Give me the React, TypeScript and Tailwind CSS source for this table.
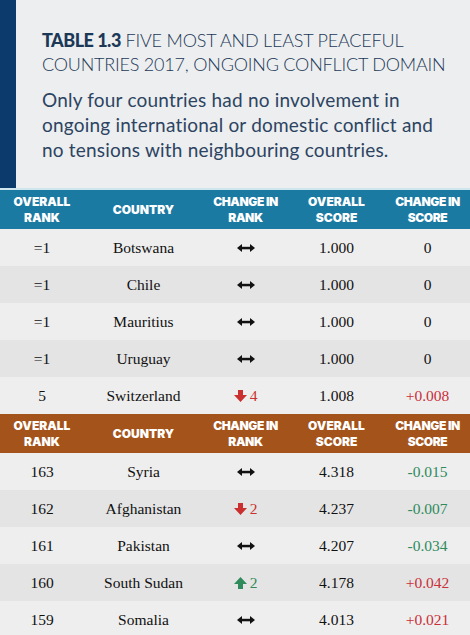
import React from "react";

type Row = {
  rank: string;
  country: string;
  change: "same" | "down" | "up";
  changeN?: string;
  score: string;
  delta: string;
  deltaTone?: "red" | "green" | "plain";
};

const top: Row[] = [
  { rank: "=1", country: "Botswana", change: "same", score: "1.000", delta: "0" },
  { rank: "=1", country: "Chile", change: "same", score: "1.000", delta: "0" },
  { rank: "=1", country: "Mauritius", change: "same", score: "1.000", delta: "0" },
  { rank: "=1", country: "Uruguay", change: "same", score: "1.000", delta: "0" },
  { rank: "5", country: "Switzerland", change: "down", changeN: "4", score: "1.008", delta: "+0.008", deltaTone: "red" },
];

const bottom: Row[] = [
  { rank: "163", country: "Syria", change: "same", score: "4.318", delta: "-0.015", deltaTone: "green" },
  { rank: "162", country: "Afghanistan", change: "down", changeN: "2", score: "4.237", delta: "-0.007", deltaTone: "green" },
  { rank: "161", country: "Pakistan", change: "same", score: "4.207", delta: "-0.034", deltaTone: "green" },
  { rank: "160", country: "South Sudan", change: "up", changeN: "2", score: "4.178", delta: "+0.042", deltaTone: "red" },
  { rank: "159", country: "Somalia", change: "same", score: "4.013", delta: "+0.021", deltaTone: "red" },
];

const cols = "grid grid-cols-[84px_119px_85px_97px_85px]";

const Same = () => (
  <svg width="18" height="8" viewBox="0 0 18 8">
    <path d="M0 4 L5 0 L5 8 Z M18 4 L13 0 L13 8 Z" fill="#111" />
    <rect x="4" y="2.8" width="10" height="2.5" fill="#111" />
  </svg>
);

const Arrow = ({ up }: { up?: boolean }) => (
  <svg width="13" height="12" viewBox="0 0 13 12" className={up ? "rotate-180" : ""}>
    <path d="M4 0 H9 V5 H13 L6.5 12 L0 5 H4 Z" fill={up ? "#2f8b5c" : "#c9302f"} />
  </svg>
);

const Header = ({ bg }: { bg: string }) => (
  <div
    className={`${cols} h-[39px] items-center text-white text-[12px] leading-[16px] font-black uppercase text-center ${bg}`}
    style={{ fontFamily: "Inter, 'DejaVu Sans', sans-serif" }}
  >
    <div>Overall<br />Rank</div>
    <div>Country</div>
    <div className="tracking-[-0.4px]">Change in<br />Rank</div>
    <div>Overall<br />Score</div>
    <div className="tracking-[-0.4px]">Change in<br />Score</div>
  </div>
);

const Rows = ({ rows }: { rows: Row[] }) => (
  <div style={{ fontFamily: "'Liberation Serif', 'DejaVu Serif', serif" }}>
    {rows.map((r, i) => (
      <div
        key={r.country}
        className={`${cols} h-[37px] items-center text-center text-[15.5px] text-[#111] ${i % 2 === 0 ? "bg-[#eeeeee]" : "bg-[#e4e4e4]"}`}
      >
        <div>{r.rank}</div>
        <div>{r.country}</div>
        <div className="flex items-center justify-center gap-[3px]">
          {r.change === "same" ? (
            <Same />
          ) : (
            <>
              <Arrow up={r.change === "up"} />
              <span className={r.change === "up" ? "text-[#2f8b5c]" : "text-[#c9302f]"}>{r.changeN}</span>
            </>
          )}
        </div>
        <div>{r.score}</div>
        <div
          className={
            r.deltaTone === "red" ? "text-[#c9303a]" : r.deltaTone === "green" ? "text-[#2f8b5c]" : ""
          }
        >
          {r.delta}
        </div>
      </div>
    ))}
  </div>
);

export default function App() {
  return (
    <div className="w-[470px] h-[635px] overflow-hidden bg-[#eeeeee]">
      <div className="flex h-[188px] bg-[#eceeef]">
        <div className="w-[16px] bg-[#0d3a6c]" />
        <div
          className="pl-[26px] pt-[28px] text-[#1c3857]"
          style={{ fontFamily: "Lato, 'Open Sans', sans-serif" }}
        >
          <div className="text-[18px] leading-[24px] font-light tracking-[-0.2px]">
            <span className="font-black tracking-[-0.5px]">TABLE 1.3</span> FIVE MOST AND LEAST PEACEFUL
            <br />
            COUNTRIES 2017, ONGOING CONFLICT DOMAIN
          </div>
          <p className="mt-[11px] text-[19px] leading-[25px] tracking-[0.2px] text-[#2c4462]">
            Only four countries had no involvement in
            <br />
            ongoing international or domestic conflict and
            <br />
            no tensions with neighbouring countries.
          </p>
        </div>
      </div>
      <div className="h-[2px] bg-[#cfe6ef]" />
      <Header bg="bg-[#1b7aa2]" />
      <Rows rows={top} />
      <Header bg="bg-[#a4531a]" />
      <Rows rows={bottom} />
    </div>
  );
}
